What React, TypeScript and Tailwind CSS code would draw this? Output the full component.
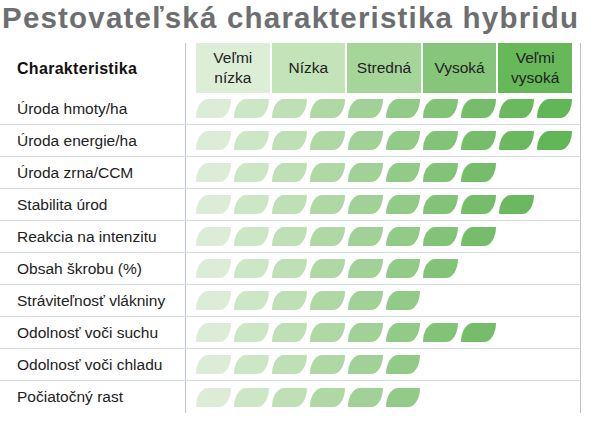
const levels = [
  { label: ["Veľmi", "nízka"], bg: "bg-[#dcefd6]" },
  { label: ["Nízka"], bg: "bg-[#c3e4b9]" },
  { label: ["Stredná"], bg: "bg-[#a6d59a]" },
  { label: ["Vysoká"], bg: "bg-[#86c67a]" },
  { label: ["Veľmi", "vysoká"], bg: "bg-[#66b859]" },
];

const leafColors = [
  "bg-[#dcecd6]",
  "bg-[#cde6c6]",
  "bg-[#bfdfb5]",
  "bg-[#b0d8a5]",
  "bg-[#a1d196]",
  "bg-[#92ca87]",
  "bg-[#83c378]",
  "bg-[#76bd6b]",
  "bg-[#6ab960]",
  "bg-[#62b658]",
];

const rows: [string, number][] = [
  ["Úroda hmoty/ha", 10],
  ["Úroda energie/ha", 10],
  ["Úroda zrna/CCM", 8],
  ["Stabilita úrod", 9],
  ["Reakcia na intenzitu", 8],
  ["Obsah škrobu (%)", 7],
  ["Stráviteľnosť vlákniny", 6],
  ["Odolnosť voči suchu", 8],
  ["Odolnosť voči chladu", 6],
  ["Počiatočný rast", 6],
];

const Leaf = ({ color }: { color: string }) => (
  <div className={`h-[19px] rounded-tl-[12px_19px] rounded-br-[12px_19px] ${color}`} />
);

export default function App() {
  return (
    <div className="w-[593px] h-[424px] bg-white overflow-hidden font-['Liberation_Sans',Arial,sans-serif] text-[#222]">
      <h1 className="pl-[2px] h-[43px] text-[29.5px] font-bold tracking-[1.2px] text-[#6d6e70] leading-[36px]">
        Pestovateľská charakteristika hybridu
      </h1>
      <div className="w-[581px]">
        <div className="flex h-[50px]">
          <div className="w-[185px] flex items-center pl-[17px] text-[16px] font-bold tracking-[0.3px] text-[#111] pt-[2px]">
            Charakteristika
          </div>
          <div className="flex-1 border-l border-r border-[#b8c2d3] pl-[10px]">
            <div className="grid grid-cols-5 gap-[2px] w-[376px] h-full">
              {levels.map((l) => (
                <div
                  key={l.label.join(" ")}
                  className={`${l.bg} flex flex-col items-center justify-center text-[15.5px] leading-[20px] text-[#222]`}
                >
                  {l.label.map((t) => (
                    <span key={t}>{t}</span>
                  ))}
                </div>
              ))}
            </div>
          </div>
        </div>
        {rows.map(([name, count], i) => (
          <div
            key={name}
            className={`flex h-[32px] ${i < rows.length - 1 ? "border-b border-[#d6dbe3]" : ""}`}
          >
            <div className="w-[185px] flex items-center pl-[17px] text-[15.5px]">{name}</div>
            <div className="flex-1 flex items-center border-l border-r border-[#b8c2d3] pl-[10px]">
              <div className="grid grid-cols-10 gap-[3px] w-[376px]">
                {leafColors.slice(0, count).map((c, j) => (
                  <Leaf key={j} color={c} />
                ))}
              </div>
            </div>
          </div>
        ))}
      </div>
    </div>
  );
}
